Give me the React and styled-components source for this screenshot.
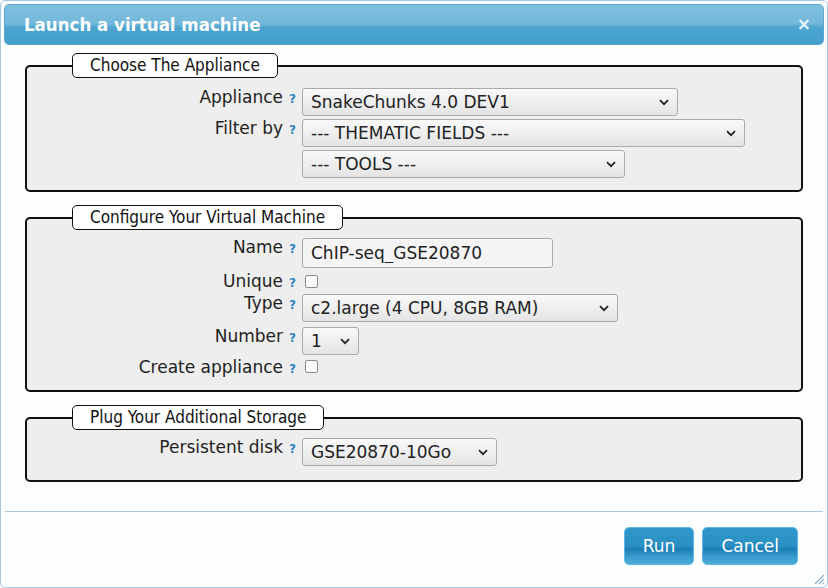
import React from 'react';
import styled, {createGlobalStyle} from 'styled-components';

const GlobalStyle = createGlobalStyle`
  html, body {
    margin: 0;
    padding: 0;
    background: #ffffff;
  }
  body {
    font-family: "DejaVu Sans", Verdana, sans-serif;
    color: #222222;
  }
  * {
    box-sizing: border-box;
  }
`;

const Dialog = styled.div`
  position: relative;
  width: 828px;
  height: 588px;
  padding: 3px;
  border: 1px solid #a6c9e2;
  border-radius: 5px;
  background: #fcfdfd;
  display: flex;
  flex-direction: column;
`;

const TitleBar = styled.div`
  height: 41px;
  display: flex;
  align-items: center;
  justify-content: space-between;
  padding: 0 12px 0 19px;
  border: 1px solid #5aa8d2;
  border-radius: 5px;
  background: linear-gradient(#80c0df 0%, #72b8da 48%, #4ca5cf 58%, #42a0cc 100%);
  color: #ffffff;
`;

const Title = styled.span`
  font-family: "DejaVu Sans", sans-serif;
  font-stretch: condensed;
  font-weight: bold;
  font-size: 18.5px;
`;

const Close = styled.span`
  font-family: "DejaVu Sans", sans-serif;
  font-weight: bold;
  font-size: 17px;
  color: #e6f3fa;
  line-height: 1;
`;

const Content = styled.div`
  padding: 8px 21px 0 21px;
  display: flex;
  flex-direction: column;
  gap: 13px;
`;

const Fieldset = styled.fieldset`
  margin: 0;
  padding: ${p => p.$top || 10}px 0 ${p => p.$bottom || 14}px 0;
  border: 2px solid #111111;
  border-radius: 5px;
  background: #eeeeee;
  min-width: 0;
`;

const Legend = styled.legend`
  margin-left: 45px;
  padding: 1px 17px 2px;
  background: #ffffff;
  border: 1px solid #111111;
  border-radius: 5px;
  font-family: "Comic Sans MS", "DejaVu Sans", sans-serif;
  font-stretch: condensed;
  font-size: 17px;
  line-height: 20px;
  color: #111111;
`;

const Rows = styled.div`
  display: flex;
  flex-direction: column;
  gap: ${p => p.$gap || 3}px;
`;

const Row = styled.div`
  display: grid;
  grid-template-columns: 275px auto;
  align-items: start;
  height: ${p => p.$h || 18}px;
  margin-top: ${p => p.$mt || 0}px;
`;

const Label = styled.label`
  text-align: right;
  padding-right: 6px;
  font-size: 17px;
  line-height: normal;
  margin-top: -1px;
  color: #222222;
  white-space: nowrap;
`;

const Help = styled.span`
  margin-left: 6px;
  font-size: 12px;
  font-weight: bold;
  color: #2b86bd;
`;

const SelectWrap = styled.div`
  position: relative;
  width: ${p => p.$w}px;
  height: 28px;
`;

const NativeSelect = styled.select`
  appearance: none;
  width: 100%;
  height: 100%;
  margin: 0;
  padding: 0 28px 0 8px;
  border: 1px solid #aaaaaa;
  border-radius: 3px;
  background: linear-gradient(#f9f9f9, #e4e4e4);
  font-family: "DejaVu Sans", sans-serif;
  font-size: 17px;
  color: #222222;
`;

const Chevron = styled.svg`
  position: absolute;
  right: 9px;
  top: 11px;
  pointer-events: none;
`;

const TextInput = styled.input`
  width: ${p => p.$w}px;
  height: 30px;
  margin: 0;
  padding: 0 8px;
  border: 1px solid #a9a9a9;
  border-radius: 3px;
  background: #f4f4f4;
  font-family: "DejaVu Sans", sans-serif;
  font-size: 17px;
  color: #222222;
`;

const Check = styled.input`
  appearance: none;
  width: 13px;
  height: 13px;
  margin: ${p => p.$mt || 3}px 0 0 3px;
  border: 1px solid #8a8a8a;
  border-radius: 2px;
  background: #fbfbfb;
`;

const Footer = styled.div`
  margin: 29px 1px 0;
  border-top: 1px solid #a6c9e2;
  padding: 15px 25px 0 0;
  display: flex;
  justify-content: flex-end;
  gap: 8px;
`;

const Button = styled.button`
  height: 38px;
  padding: 0 18px;
  border: 1px solid #5fb8e3;
  border-radius: 5px;
  background: linear-gradient(#2f97c9 0%, #2a90c3 50%, #1a7db5 58%, #3a9dce 80%, #4eaad6 100%);
  color: #ffffff;
  font-family: "DejaVu Sans", sans-serif;
  font-size: 17px;
  cursor: pointer;
`;

const Grip = styled.svg`
  position: absolute;
  right: 2px;
  bottom: 2px;
`;

function Select({width, value}) {
  return (
    <SelectWrap $w={width}>
      <NativeSelect defaultValue={value}>
        <option>{value}</option>
      </NativeSelect>
      <Chevron width="10" height="7" viewBox="0 0 10 7">
        <path d="M1 1.2 L5 5.2 L9 1.2" fill="none" stroke="#222" strokeWidth="1.7" />
      </Chevron>
    </SelectWrap>
  );
}

function Field({label, h, mt, children}) {
  return (
    <Row $h={h} $mt={mt}>
      <Label>
        {label}
        <Help>?</Help>
      </Label>
      <div>{children}</div>
    </Row>
  );
}

export default function App() {
  return (
    <>
      <GlobalStyle />
      <Dialog>
        <TitleBar>
          <Title>Launch a virtual machine</Title>
          <Close>×</Close>
        </TitleBar>
        <Content>
          <Fieldset $top={10} $bottom={12}>
            <Legend>Choose The Appliance</Legend>
            <Rows $gap={3}>
              <Field label="Appliance" h={28}>
                <Select width={376} value="SnakeChunks 4.0 DEV1" />
              </Field>
              <Field label="Filter by" h={28}>
                <Select width={443} value="--- THEMATIC FIELDS ---" />
              </Field>
              <Row $h={28}>
                <span />
                <Select width={323} value="--- TOOLS ---" />
              </Row>
            </Rows>
          </Fieldset>

          <Fieldset $top={8}>
            <Legend>Configure Your Virtual Machine</Legend>
            <Rows $gap={4}>
              <Field label="Name" h={30}>
                <TextInput $w={251} defaultValue="ChIP-seq_GSE20870" />
              </Field>
              <Field label="Unique" h={18}>
                <Check type="checkbox" $mt={3} />
              </Field>
              <Field label="Type" h={28}>
                <Select width={316} value="c2.large (4 CPU, 8GB RAM)" />
              </Field>
              <Field label="Number" h={28} mt={1}>
                <Select width={57} value="1" />
              </Field>
              <Field label="Create appliance" h={18} mt={-1}>
                <Check type="checkbox" $mt={2} />
              </Field>
            </Rows>
          </Fieldset>

          <Fieldset $top={8}>
            <Legend>Plug Your Additional Storage</Legend>
            <Rows>
              <Field label="Persistent disk" h={28}>
                <Select width={195} value="GSE20870-10Go" />
              </Field>
            </Rows>
          </Fieldset>
        </Content>
        <Footer>
          <Button>Run</Button>
          <Button>Cancel</Button>
        </Footer>
        <Grip width="12" height="12" viewBox="0 0 12 12">
          <path d="M11 2 L2 11 M11 6 L6 11 M11 10 L10 11" stroke="#8fb6cf" strokeWidth="1.2" />
        </Grip>
      </Dialog>
    </>
  );
}
